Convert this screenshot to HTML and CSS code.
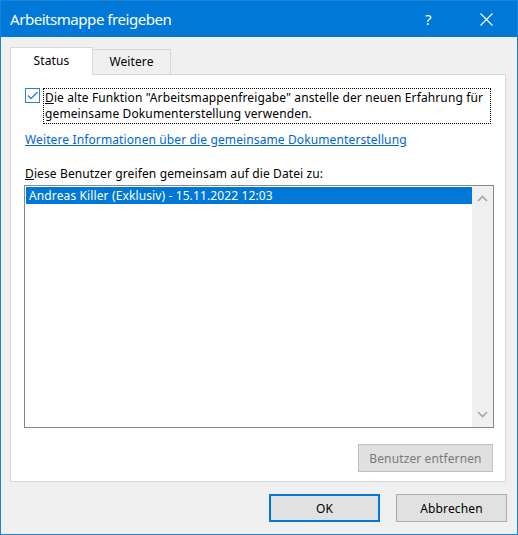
FILE: index.html
```html
<!DOCTYPE html>
<html lang="de">
<head>
<meta charset="utf-8">
<title>Arbeitsmappe freigeben</title>
<link rel="stylesheet" href="styles.css">
</head>
<body>
<div class="window">
  <div class="titlebar">
    <div class="title">Arbeitsmappe freigeben</div>
    <div class="title-controls">
      <span class="help">?</span>
      <svg class="close" width="13" height="13" viewBox="0 0 13 13"><path d="M0.5 0.5 L12.5 12.5 M12.5 0.5 L0.5 12.5" stroke="#fff" stroke-width="1.1" fill="none"/></svg>
    </div>
  </div>
  <div class="body">
    <div class="tabs">
      <div class="tab active">Status</div>
      <div class="tab">Weitere</div>
    </div>
    <div class="panel">
      <div class="check-row">
        <div class="checkbox">
          <svg width="13" height="13" viewBox="0 0 13 13"><path d="M2 6.5 L5 9.5 L11.5 3" stroke="#2b7fd8" stroke-width="1.3" fill="none"/></svg>
        </div>
        <div class="check-label"><span class="line"><u>D</u>ie alte Funktion "Arbeitsmappenfreigabe" anstelle der neuen Erfahrung für</span><span class="line">gemeinsame Dokumenterstellung verwenden.</span></div>
      </div>
      <a class="link" href="#">Weitere Informationen über die gemeinsame Dokumenterstellung</a>
      <div class="list-label"><u>D</u>iese Benutzer greifen gemeinsam auf die Datei zu:</div>
      <div class="listbox">
        <div class="rows">
          <div class="row selected">Andreas Killer (Exklusiv) - 15.11.2022 12:03</div>
        </div>
        <div class="scrollbar">
          <svg width="11" height="7" viewBox="0 0 11 7"><path d="M1 6 L5.5 1.5 L10 6" stroke="#a6a6a6" stroke-width="1.6" fill="none"/></svg>
          <svg width="11" height="7" viewBox="0 0 11 7"><path d="M1 1 L5.5 5.5 L10 1" stroke="#a6a6a6" stroke-width="1.6" fill="none"/></svg>
        </div>
      </div>
      <div class="remove-row">
        <button class="btn disabled" disabled>Benutzer entfernen</button>
      </div>
    </div>
    <div class="footer">
      <button class="btn default">OK</button>
      <button class="btn">Abbrechen</button>
    </div>
  </div>
</div>
</body>
</html>
```
FILE: styles.css
```css
* { box-sizing: border-box; }
html, body { margin: 0; padding: 0; background: #f0f0f0; }
body {
  font-family: "Noto Sans", "Segoe UI", sans-serif;
  font-size: 12px;
  letter-spacing: 0.12px;
  color: #000;
}
.window {
  width: 518px;
  height: 535px;
  border: 1px solid #1883d7;
  display: flex;
  flex-direction: column;
  background: #f0f0f0;
}
.titlebar {
  height: 36px;
  background: #0078d7;
  color: #fff;
  display: flex;
  align-items: center;
  justify-content: space-between;
  padding-left: 9px;
}
.title { font-size: 15px; letter-spacing: -0.45px; margin-top: -1px; }
.title-controls { display: flex; align-items: center; }
.help { font-size: 15px; width: 10px; margin-right: 45px; margin-top: -1px; }
.close { margin-right: 24px; }
.body {
  flex: 1;
  padding: 10px 11px 0 9px;
  display: flex;
  flex-direction: column;
}
.tabs { display: flex; align-items: flex-end; height: 27px; }
.tab {
  height: 25px;
  border: 1px solid #d9d9d9;
  border-bottom: none;
  background: #f0f0f0;
  padding: 0;
  line-height: 24px;
  text-align: center;
  width: 79px;
  margin-left: -1px;
}
.tab.active {
  height: 28px;
  margin-bottom: -1px;
  background: #fff;
  width: 83px;
  margin-left: 0;
  position: relative;
  z-index: 1;
  line-height: 26px;
  padding-bottom: 2px;
}
.panel {
  height: 408px;
  background: #fff;
  border: 1px solid #d9d9d9;
  padding: 13px 0 0 14px;
  display: flex;
  flex-direction: column;
  align-items: flex-start;
}
.check-row { display: flex; align-items: flex-start; }
.checkbox {
  width: 15px;
  height: 15px;
  border: 1px solid #2b7fd8;
  margin-right: 3px;
  display: flex;
  align-items: center;
  justify-content: center;
}
.check-label {
  width: 448px;
  height: 36px;
  border: 1px dotted #000;
  padding: 1px 0 0 1px;
  display: flex;
  flex-direction: column;
}
.line { line-height: 16px; white-space: nowrap; }
.link {
  margin-top: 8px;
  color: #0066cc;
  text-decoration: underline;
  line-height: 16px;
}
.list-label {
  margin-top: 18px;
  line-height: 16px;
}
.listbox {
  margin-top: 3px;
  margin-left: -1px;
  width: 470px;
  height: 243px;
  border: 1px solid #828790;
  display: flex;
}
.rows { flex: 1; padding: 1px 0 0 1px; }
.row {
  height: 17px;
  line-height: 17px;
  padding-left: 3px;
}
.row.selected { background: #0078d7; color: #fff; }
.scrollbar {
  width: 21px;
  background: #f0f0f0;
  display: flex;
  flex-direction: column;
  align-items: center;
  justify-content: space-between;
  padding: 9px 0 9px 0;
}
.remove-row {
  width: 469px;
  display: flex;
  justify-content: flex-end;
  margin-top: 16px;
  margin-left: -1px;
}
.btn {
  font-family: inherit;
  font-size: 12px;
  letter-spacing: 0.12px;
  height: 28px;
  background: #e1e1e1;
  border: 1px solid #adadad;
  color: #000;
  padding: 0;
}
.btn.disabled {
  width: 135px;
  background: #e0e0e0;
  border-color: #bfbfbf;
  color: #7a7a7a;
}
.footer {
  display: flex;
  justify-content: flex-end;
  gap: 16px;
  margin-top: 12px;
  margin-right: -1px;
}
.footer .btn { width: 111px; }
.btn.default { border: 2px solid #0078d7; }
```
